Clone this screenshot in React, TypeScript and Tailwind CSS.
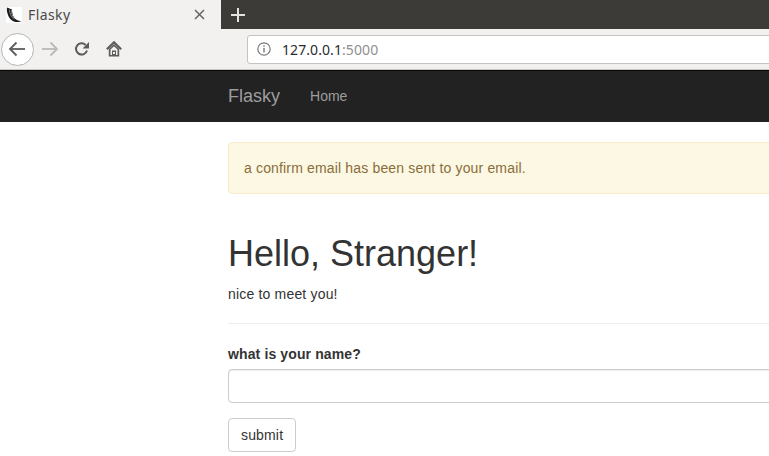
import { useState } from 'react';

//* Small browser toolbar icons, drawn to match the Firefox ones
function BackIcon() {
  return (
    <svg width="18" height="16" viewBox="0 0 18 16" fill="none" stroke="#5b5b5a" strokeWidth="1.8">
      <path d="M17 8H2" />
      <path d="M8.5 1.5 2 8l6.5 6.5" />
    </svg>
  );
}

function ForwardIcon() {
  return (
    <svg width="18" height="16" viewBox="0 0 18 16" fill="none" stroke="#b9b9b7" strokeWidth="1.8">
      <path d="M1 8h15" />
      <path d="M9.5 1.5 16 8l-6.5 6.5" />
    </svg>
  );
}

function ReloadIcon() {
  return (
    <svg width="16" height="16" viewBox="0 0 16 16" fill="none">
      <path d="M13 9.5A5.6 5.6 0 1 1 11.6 4" stroke="#5b5b5a" strokeWidth="2" />
      <path d="M15 1v6.4H8.6z" fill="#5b5b5a" />
    </svg>
  );
}

function HomeIcon() {
  return (
    <svg width="16" height="16" viewBox="0 0 16 16" fill="none">
      <path d="M0.8 8.200 8 1.200l7.200 7" stroke="#5b5b5a" strokeWidth="2" />
      <path d="M2.800 8 8 3l5.200 5v7.500H2.800z" fill="#5b5b5a" />
      <path d="M4.500 8.500 8 5.200l3.500 3.300v5.500h-1.500V9.500H6V14H4.500z" fill="#f2f1ef" />
      <rect x="7" y="11" width="2" height="2" fill="#f2f1ef" />
    </svg>
  );
}

function InfoIcon() {
  return (
    <svg width="14" height="14" viewBox="0 0 14 14" fill="none">
      <circle cx="7" cy="7" r="6.2" stroke="#7a7a7a" strokeWidth="1.2" />
      <rect x="6.3" y="6" width="1.4" height="4.5" fill="#7a7a7a" />
      <rect x="6.3" y="3.4" width="1.4" height="1.5" fill="#7a7a7a" />
    </svg>
  );
}

function FlaskLogo() {
  return (
    <svg width="16" height="16" viewBox="0 0 16 16" className="bg-white">
      <path d="M1 0.500C.5 3 1 6 2.500 9.200 4 12.500 7 14.700 10 15c2 .2 4 0 5.500-1-1.500 0-3.500-.3-5.500-1.500C7.500 11 6 7 6 2.500 4.500 1.800 2.500 1 1 .5z" fill="#1a1a1a" />
      <path d="M3.500 2.500c0 3.500 1.500 7 4.500 10M5.500 3c-.2 3 .8 6 2.500 8" stroke="#9a9a9a" strokeWidth="0.8" fill="none" />
    </svg>
  );
}

export default function App() {
  const [name, setName] = useState('');

  return (
    <div className="w-[769px] h-[456px] overflow-hidden bg-white font-['Liberation_Sans',Arial,sans-serif] text-[14px] text-[#333]">
      {/* Tab strip */}
      <div className="h-[29px] flex bg-[#3d3b37]">
        <div className="w-[221px] flex items-center bg-[#f2f1ef] pl-[6px] pr-[16px]">
          <FlaskLogo />
          <span className="ml-[6px] flex-1 font-['Noto_Sans',sans-serif] text-[14px] tracking-[0.4px] text-[#4a4a4a]">Flasky</span>
          <svg width="11" height="11" viewBox="0 0 11 11" stroke="#666" strokeWidth="1.500">
            <path d="M1 1l9 9M10 1l-9 9" />
          </svg>
        </div>
        <div className="w-[34px] flex items-center justify-center">
          <svg width="14" height="14" viewBox="0 0 14 14" stroke="#e4e3e0" strokeWidth="2">
            <path d="M7 0v14M0 7h14" />
          </svg>
        </div>
      </div>

      {/* Toolbar */}
      <div className="h-[41px] flex items-center bg-[#f2f1ef] border-b border-[#c9c8c5]">
        <div className="ml-[1px] w-[33px] h-[33px] rounded-full border border-[#b5b5b3] bg-white flex items-center justify-center pr-[1px]">
          <BackIcon />
        </div>
        <div className="ml-[7px] w-[18px] flex"><ForwardIcon /></div>
        <div className="ml-[15px] w-[16px] flex"><ReloadIcon /></div>
        <div className="ml-[16px] w-[16px] flex"><HomeIcon /></div>
        <div className="ml-[125px] flex-1 h-[29px] flex items-center pl-[9px] bg-white border border-[#c4c3c0] rounded-[3px] -mr-[10px]">
          <InfoIcon />
          <span className="ml-[11px] font-['Noto_Sans',sans-serif] text-[14px] tracking-[0.08px] text-[#2b2b2b]">
            127.0.0.1<span className="text-[#8f8f8f]">:5000</span>
          </span>
        </div>
      </div>

      {/* Navbar */}
      <nav className="h-[52px] bg-[#222] border-t border-[#080808] flex items-center pl-[228px]">
        <a className="text-[18px] text-[#9d9d9d]">Flasky</a>
        <a className="ml-[30px] text-[14px] text-[#9d9d9d]">Home</a>
      </nav>

      {/* Page content */}
      <main className="w-[1000px] ml-[228px]">
        <div className="mt-[20px] h-[52px] flex items-center pl-[15px] bg-[#fcf8e3] border border-[#faebcc] rounded tracking-[0.16px] text-[#8a6d3b]">
          a confirm email has been sent to your email.
        </div>

        <div className="mt-[40px] pb-[19px] border-b border-[#eee]">
          <h1 className="text-[36px] leading-[40px] font-medium text-[#333]">Hello, Stranger!</h1>
          <p className="mt-[10px] leading-[20px] tracking-[0.18px]">nice to meet you!</p>
        </div>

        <form className="mt-[20px]">
          <label className="block leading-[20px] font-bold tracking-[0.12px]">what is your name?</label>
          <input
            type="text"
            value={name}
            onChange={(e) => setName(e.target.value)}
            className="mt-[5px] block w-full h-[34px] px-3 border border-[#ccc] rounded bg-white shadow-[inset_0_1px_1px_rgba(0,0,0,0.075)]"
          />
          <button
            type="button"
            className="mt-[15px] h-[34px] px-3 border border-[#ccc] rounded bg-white tracking-[0.16px] text-[#333]"
          >
            submit
          </button>
        </form>
      </main>
    </div>
  );
}
